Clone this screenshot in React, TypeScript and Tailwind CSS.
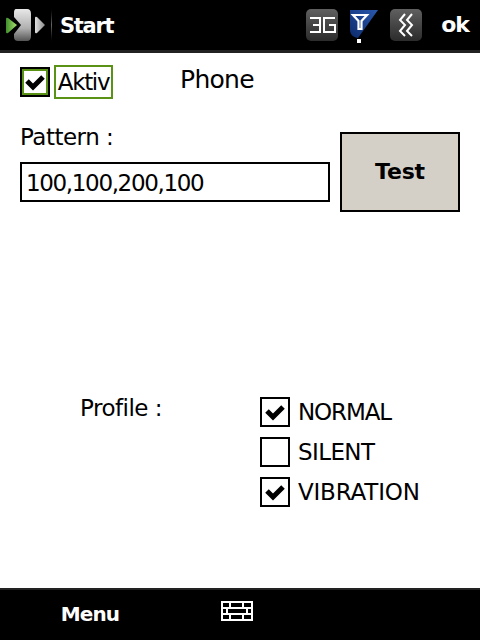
const font = "font-['DejaVu_Sans',sans-serif]";

function Check({ checked, green }: { checked?: boolean; green?: boolean }) {
  return (
    <div className={`flex h-[30px] w-[30px] shrink-0 items-center justify-center border-2 border-black bg-white ${green ? "outline-2 -outline-offset-4 outline-[#5a9216]" : ""}`}>
      {checked && (
        <svg width="20" height="18" viewBox="0 0 20 18">
          <path d="M2 8 L8 14 L18 4" fill="none" stroke="#000" strokeWidth="5" />
        </svg>
      )}
    </div>
  );
}

function Opt({ label, checked, track }: { label: string; checked?: boolean; track: string }) {
  return (
    <div className="flex h-[30px] items-center gap-2">
      <Check checked={checked} />
      <span className={`pt-[1px] text-[23px] leading-none text-black ${track}`}>{label}</span>
    </div>
  );
}

function StartLogo() {
  return (
    <svg width="46" height="36" viewBox="0 0 46 36">
      <defs>
        <linearGradient id="g" x1="0" y1="0" x2="0" y2="1">
          <stop offset="0" stopColor="#e8e8e8" />
          <stop offset="0.6" stopColor="#b0b0b0" />
          <stop offset="1" stopColor="#555" />
        </linearGradient>
        <linearGradient id="gg" x1="0" y1="0" x2="1" y2="0">
          <stop offset="0" stopColor="#3f8f2a" />
          <stop offset="1" stopColor="#a8e070" />
        </linearGradient>
        <linearGradient id="gr" x1="0" y1="0" x2="1" y2="0">
          <stop offset="0" stopColor="#e0e0e0" />
          <stop offset="1" stopColor="#8a8a8a" />
        </linearGradient>
      </defs>
      <path d="M2 12 Q2 10 4 11 L13 18 L4 26 Q2 27 2 25 Z" fill="url(#gg)" />
      <path d="M12 2 H23 Q27 2 27 7 V29 Q27 34 23 34 H14 Q10 34 10 30 V27 L17 18 L10 10 V6 Q10 2 12 2 Z" fill="url(#g)" />
      <path d="M31 11 Q31 9 33 10 L41 18 L33 26 Q31 27 31 25 Z" fill="url(#gr)" />
    </svg>
  );
}

function TrayBox({ children }: { children: React.ReactNode }) {
  return (
    <div className="flex h-[32px] w-[32px] items-center justify-center rounded-[5px] bg-gradient-to-b from-[#606060] to-[#2c2c2c]">
      {children}
    </div>
  );
}

export default function App() {
  return (
    <div className={`flex h-[640px] w-[480px] flex-col overflow-hidden bg-white ${font}`}>
      <header className="flex h-[53px] shrink-0 items-center border-b-[3px] border-[#222] bg-black pl-[4px] pr-[11px]">
        <StartLogo />
        <div className="ml-[1px] h-[38px] w-px bg-gradient-to-b from-black via-[#666] to-black" />
        <span className="ml-[8px] pt-[2px] text-[21px] font-bold leading-none tracking-[-1.3px] text-white">Start</span>
        <div className="ml-auto flex items-center">
          <TrayBox>
            <svg width="28" height="18" viewBox="0 0 28 18" fill="none" stroke="#fff" strokeWidth="2">
              <path d="M2 2 H12 V16 H2 M5 9 H12" />
              <path d="M27 2 H16 V16 H27 V9 H21" />
            </svg>
          </TrayBox>
          <svg className="ml-[11px]" width="30" height="36" viewBox="0 0 30 36">
            <defs>
              <linearGradient id="b" x1="0" y1="1" x2="1" y2="0">
                <stop offset="0" stopColor="#0c2a6b" />
                <stop offset="1" stopColor="#2a58ad" />
              </linearGradient>
            </defs>
            <path d="M1 3 H29 L9 31 Q2 30 1 24 Z" fill="url(#b)" />
            <path d="M4 8 H18 L12.5 14 V22 H9.5 V14 Z" fill="none" stroke="#fff" strokeWidth="2.2" />
            <rect x="8" y="32" width="4" height="4" fill="#fff" />
          </svg>
          <div className="ml-[11px]">
            <TrayBox>
              <svg width="20" height="26" viewBox="0 0 20 26" fill="none" stroke="#fff" strokeWidth="2">
                <path d="M9 2 L4 8 L9 13 L4 19 L9 24" />
                <path d="M16 2 L11 8 L16 13 L11 19 L16 24" />
              </svg>
            </TrayBox>
          </div>
          <span className="ml-[19px] text-[22px] font-bold leading-none tracking-[-1px] text-white">ok</span>
        </div>
      </header>

      <main className="flex flex-1 flex-col px-[20px]">
        <div className="mt-[12px] flex items-center">
          <Check checked green />
          <div className="ml-[4px] flex h-[34px] w-[59px] items-center justify-center border-2 border-[#5a9216] text-[23px] leading-none tracking-[-1.3px] text-black">
            Aktiv
          </div>
          <span className="ml-[67px] -translate-y-[3px] text-[25px] leading-none tracking-[-0.7px] text-black">Phone</span>
        </div>

        <div className="mt-[33px] flex items-start justify-between">
          <div className="flex w-[310px] flex-col">
            <span className="h-[30px] text-[23px] leading-[10px] tracking-[-0.5px] text-black">Pattern :</span>
            <div className="flex h-[40px] items-center border-2 border-black pl-[4px] pt-[2px] text-[23px] leading-none tracking-[-1.35px] text-black">
              100,100,200,100
            </div>
          </div>
          <button className="flex h-[80px] w-[120px] items-center justify-center border-2 border-black bg-[#d4d0c8] text-[22px] font-bold leading-none tracking-[-0.2px] text-black">
            Test
          </button>
        </div>

        <div className="mt-[185px] flex items-start pl-[60px]">
          <span className="w-[180px] text-[23px] leading-[22px] tracking-[-0.5px] text-black">Profile :</span>
          <div className="flex flex-col gap-[10px]">
            <Opt label="NORMAL" checked track="tracking-[-1.1px]" />
            <Opt label="SILENT" track="tracking-[-0.6px]" />
            <Opt label="VIBRATION" checked track="tracking-[-0.2px]" />
          </div>
        </div>
      </main>

      <footer className="flex h-[52px] shrink-0 border-t-2 border-[#222] bg-black">
        <div className="flex w-[180px] items-center justify-center pb-[2px] text-[20px] font-bold leading-none tracking-[-0.9px] text-white">Menu</div>
        <div className="ml-[41px] pt-[11px]">
          <svg width="32" height="20" viewBox="0 0 32 20" fill="none" stroke="#fff" strokeWidth="2">
            <rect x="1" y="1" width="30" height="18" />
            <path d="M1 7 H31 M1 13 H31 M9 1 V7 M22 1 V7 M6 7 V13 M26 7 V13 M9 13 V19 M22 13 V19" />
          </svg>
        </div>
      </footer>
    </div>
  );
}
